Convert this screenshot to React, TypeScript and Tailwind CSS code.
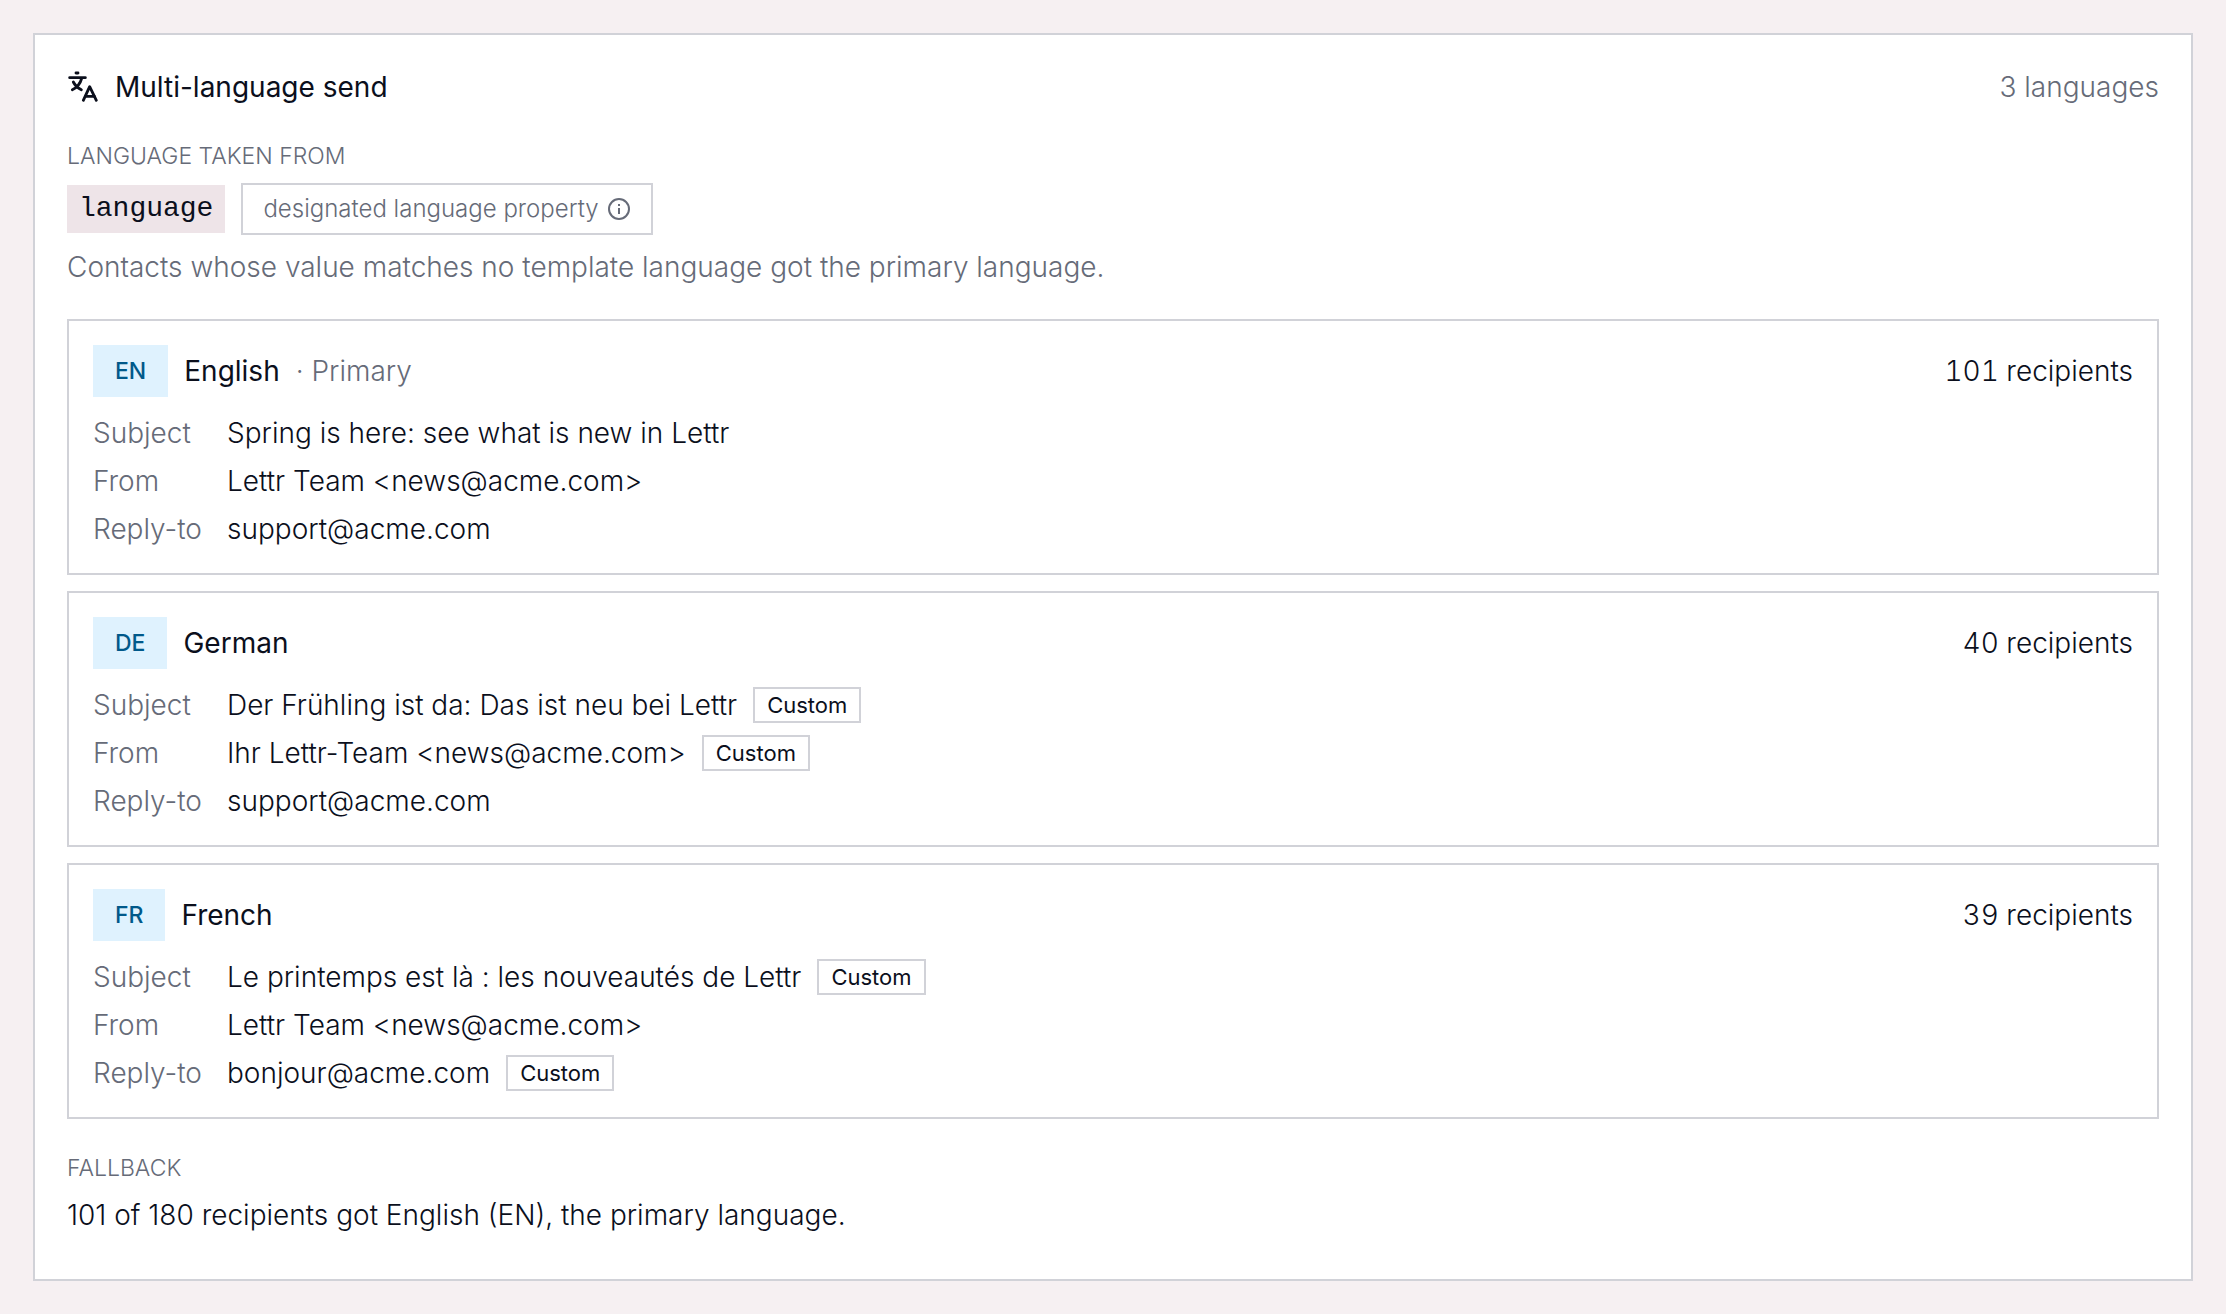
import type { ReactNode } from "react";

type Field = { label: string; value: string; custom?: boolean };
type Language = {
  code: string;
  name: string;
  primary?: boolean;
  recipients: number;
  fields: Field[];
};

const languages: Language[] = [
  {
    code: "EN",
    name: "English",
    primary: true,
    recipients: 101,
    fields: [
      { label: "Subject", value: "Spring is here: see what is new in Lettr" },
      { label: "From", value: "Lettr Team <news@acme.com>" },
      { label: "Reply-to", value: "support@acme.com" },
    ],
  },
  {
    code: "DE",
    name: "German",
    recipients: 40,
    fields: [
      { label: "Subject", value: "Der Frühling ist da: Das ist neu bei Lettr", custom: true },
      { label: "From", value: "Ihr Lettr-Team <news@acme.com>", custom: true },
      { label: "Reply-to", value: "support@acme.com" },
    ],
  },
  {
    code: "FR",
    name: "French",
    recipients: 39,
    fields: [
      { label: "Subject", value: "Le printemps est là : les nouveautés de Lettr", custom: true },
      { label: "From", value: "Lettr Team <news@acme.com>" },
      { label: "Reply-to", value: "bonjour@acme.com", custom: true },
    ],
  },
];

function TranslateIcon() {
  return (
    <svg
      viewBox="9 15 96 96"
      className="size-8 shrink-0"
      fill="none"
      stroke="currentColor"
      strokeWidth="8.5"
      strokeLinecap="round"
      strokeLinejoin="round"
      aria-hidden="true"
    >
      <path d="M36 21h6" />
      <path d="M17 35h47" />
      <path d="M53 37c-4 15-13 27-28 34" />
      <path d="M28 48c5 10 13 18 24 23" />
      <path d="M58 103 77 62l20 41" />
      <path d="M65 91h26" />
    </svg>
  );
}

function InfoIcon() {
  return (
    <svg viewBox="0 0 24 24" className="size-6 shrink-0" fill="none" stroke="currentColor" strokeWidth="2" aria-hidden="true">
      <circle cx="12" cy="12" r="10" />
      <path d="M12 11v6M12 7v2" />
    </svg>
  );
}

function SectionLabel({ children }: { children: ReactNode }) {
  return <h3 className="text-[23px] leading-[34px] text-[#666b78] uppercase">{children}</h3>;
}

function LanguageCard({ language }: { language: Language }) {
  return (
    <li className="border-2 border-[#d1d2d8] p-6">
      <div className="flex items-center gap-4">
        <span className="flex h-[52px] items-center bg-sky-100 px-[22px] text-[23px] font-medium text-sky-800">
          {language.code}
        </span>
        <span className="font-normal">{language.name}</span>
        {language.primary && <span className="text-[#666b78]">· Primary</span>}
        <span className="ml-auto tabular-nums">{language.recipients} recipients</span>
      </div>
      <dl className="mt-4 grid grid-cols-[110px_1fr] gap-x-6 gap-y-2">
        {language.fields.map((field) => (
          <div key={field.label} className="contents">
            <dt className="text-[#666b78]">{field.label}</dt>
            <dd className="flex items-center gap-4">
              {field.value}
              {field.custom && (
                <span className="border-2 border-[#d1d2d8] px-3 text-[22px] leading-8 font-normal">Custom</span>
              )}
            </dd>
          </div>
        ))}
      </dl>
    </li>
  );
}

export default function App() {
  return (
    <main className="min-h-screen bg-[#f6f0f2] p-[33px] font-['Inter',sans-serif] text-[28px] leading-10 font-light text-[#0b0f1c]">
      <section className="border-2 border-[#d1d2d8] bg-white px-8 pt-8 pb-11">
        <header className="flex items-center gap-4">
          <TranslateIcon />
          <h2 className="font-normal">Multi-language send</h2>
          <span className="ml-auto text-[#666b78]">3 languages</span>
        </header>

        <div className="mt-8">
          <SectionLabel>Language taken from</SectionLabel>
          <div className="mt-[10px] flex items-center gap-4">
            <code className="bg-[#eee4e8] px-3 py-1 font-['Liberation_Mono',monospace] font-normal">language</code>
            <button type="button" className="flex h-[52px] items-center gap-2 border-2 border-[#d1d2d8] px-5 text-[24px] text-[#666b78]">
              designated language property
              <InfoIcon />
            </button>
          </div>
          <p className="mt-3 text-[#666b78]">
            Contacts whose value matches no template language got the primary language.
          </p>
        </div>

        <ul className="mt-8 flex flex-col gap-4">
          {languages.map((language) => (
            <LanguageCard key={language.code} language={language} />
          ))}
        </ul>

        <div className="mt-8">
          <SectionLabel>Fallback</SectionLabel>
          <p className="mt-[10px]">101 of 180 recipients got English (EN), the primary language.</p>
        </div>
      </section>
    </main>
  );
}
